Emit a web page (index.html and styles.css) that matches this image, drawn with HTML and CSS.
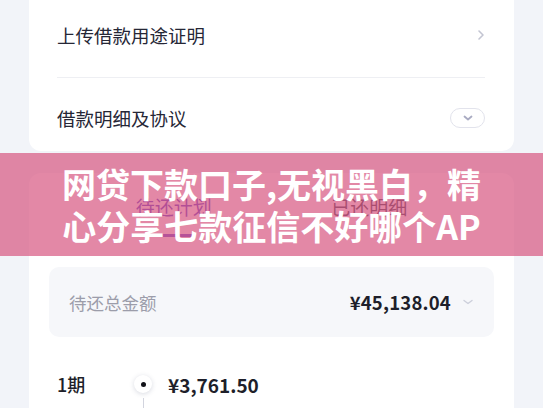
FILE: index.html
```html
<!DOCTYPE html>
<html lang="zh-CN">
<head>
<meta charset="utf-8">
<link rel="stylesheet" href="styles.css">
</head>
<body>
<div class="page">
  <div class="card card-top">
    <div class="row row-first">
      <span class="row-label">上传借款用途证明</span>
      <svg class="chev-right" width="8" height="12" viewBox="0 0 8 12"><path d="M2 2l4 4-4 4" fill="none" stroke="#c3c5d2" stroke-width="1.6" stroke-linecap="round" stroke-linejoin="round"/></svg>
    </div>
    <div class="divider"></div>
    <div class="row row-second">
      <span class="row-label">借款明细及协议</span>
      <span class="pill"><svg width="12" height="8" viewBox="0 0 12 8"><path d="M2.5 2.5l3.5 3 3.5-3" fill="none" stroke="#a9abc2" stroke-width="1.8" stroke-linecap="round" stroke-linejoin="round"/></svg></span>
    </div>
  </div>

  <div class="card card-plan">
    <div class="tabs">
      <div class="tab tab-active"><span>待还计划</span><i class="tab-bar"></i></div>
      <div class="tab"><span>已还明细</span></div>
    </div>
    <div class="total">
      <span class="total-label">待还总金额</span>
      <span class="total-value">¥45,138.04</span>
      <svg class="chev-down" width="12" height="8" viewBox="0 0 12 8"><path d="M2 2.5l4 3 4-3" fill="none" stroke="#cdd0db" stroke-width="1.4" stroke-linecap="round" stroke-linejoin="round"/></svg>
    </div>
    <div class="period">
      <div class="period-main">
        <span class="period-no">1期</span>
        <span class="node"><i></i></span>
        <span class="period-amt">¥3,761.50</span>
      </div>
      <div class="period-sub">
        <span class="sub-date">2024/03/15</span>
        <span class="sub-line"></span>
        <span class="sub-item">本金 ¥3,521.23</span>
        <span class="sub-item">利息 ¥240.27</span>
      </div>
    </div>
  </div>
</div>

<div class="banner">
  <div class="banner-line">网贷下款口子,无视黑白，精</div>
  <div class="banner-line">心分享七款征信不好哪个AP</div>
</div>
</body>
</html>
```

FILE: styles.css
```css
* { box-sizing: border-box; margin: 0; padding: 0; }

html, body {
  width: 543px;
  height: 408px;
  overflow: hidden;
}

body {
  background: #f2f4f9;
  font-family: "Noto Sans CJK SC", "Noto Sans", sans-serif;
  color: #232433;
  position: relative;
}

.page {
  padding: 0 29px;
}

.card {
  background: #ffffff;
}

.card-top {
  border-radius: 0 0 12px 12px;
  padding: 0 29px 0 28px;
}

.row {
  display: flex;
  align-items: center;
  justify-content: space-between;
}

.row-first {
  height: 70px;
  margin-bottom: 7px;
}

.row-second {
  height: 73px;
  padding-top: 7px;
}

.row-label {
  font-size: 18.5px;
  line-height: 26px;
  color: #262736;
}

.chev-right {
  margin-right: 0;
}

.divider {
  height: 1px;
  background: #eeeff3;
}

.pill {
  width: 35px;
  height: 20px;
  border: 1px solid #e2e3ec;
  border-radius: 10px;
  display: flex;
  align-items: center;
  justify-content: center;
}

.card-plan {
  margin-top: 22px;
  border-radius: 12px 12px 0 0;
  padding: 20px 20px 0;
  height: 300px;
}

.tabs {
  display: flex;
  margin: 0 27px;
}

.tab {
  flex: 1;
  display: flex;
  flex-direction: column;
  align-items: center;
  font-size: 19px;
  line-height: 28px;
  color: #3a3b4a;
}

.tab-active {
  color: #5a3fc8;
}

.tab-bar {
  display: block;
  width: 45px;
  height: 3px;
  border-radius: 2px;
  background: #6a4bd0;
  margin-top: 13px;
}

.total {
  margin-top: 30px;
  height: 70px;
  background: #f6f7fa;
  border-radius: 10px;
  display: flex;
  align-items: center;
  padding: 0 20px;
}

.total-label {
  font-size: 17.5px;
  color: #9c9daa;
  flex: 1;
}

.total-value {
  font-size: 18.5px;
  font-weight: 700;
  color: #1e1f2a;
  letter-spacing: 0.2px;
}

.chev-down {
  margin-left: 11px;
}

.period {
  margin-top: 33px;
  padding-left: 8px;
  position: relative;
}

.period-main {
  display: flex;
  align-items: center;
  height: 28px;
}

.period-no {
  width: 77px;
  font-size: 18px;
  font-weight: 500;
  color: #1e1f2a;
}

.node {
  width: 18px;
  height: 18px;
  border-radius: 50%;
  background: #ffffff;
  box-shadow: 0 1px 5px rgba(40, 50, 90, 0.18);
  display: flex;
  align-items: center;
  justify-content: center;
}

.node i {
  display: block;
  width: 5px;
  height: 5px;
  border-radius: 50%;
  background: #111218;
}

.period-amt {
  margin-left: 16px;
  font-size: 19px;
  font-weight: 700;
  color: #1e1f2a;
}

.period-sub {
  display: flex;
  align-items: flex-start;
  height: 40px;
}

.sub-date {
  width: 77px;
  font-size: 13px;
  color: #a5a6b2;
  padding-top: 12px;
}

.sub-line {
  width: 18px;
  height: 40px;
  display: flex;
  justify-content: center;
  background: linear-gradient(#d2d4de, #d2d4de) center / 1px 100% no-repeat;
}

.sub-item {
  font-size: 13px;
  color: #a5a6b2;
  padding-top: 12px;
  margin-left: 16px;
  width: 90px;
}

.banner {
  position: absolute;
  left: 0;
  right: 0;
  top: 153px;
  height: 103px;
  background: rgba(215, 86, 128, 0.7);
  display: flex;
  flex-direction: column;
  justify-content: center;
  align-items: center;
  padding-top: 1px;
}

.banner-line {
  font-size: 34px;
  font-weight: 700;
  line-height: 42px;
  color: #ffffff;
  white-space: nowrap;
}
```
